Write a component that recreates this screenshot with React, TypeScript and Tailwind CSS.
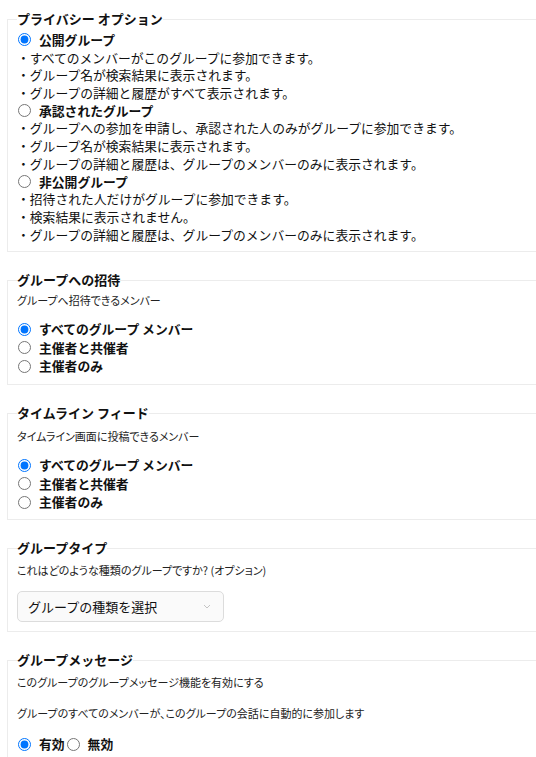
import React from "react";

const font = { fontFamily: '"Noto Sans CJK JP", "Noto Sans", sans-serif' };

function Section({ title, children, className = "" }: { title: string; children: React.ReactNode; className?: string }) {
  return (
    <fieldset className={`ml-[7px] mr-[-40px] border border-[#ececec] pl-[9px] ${className}`}>
      <legend className="text-[13px] font-bold leading-4 text-[#111]">{title}</legend>
      {children}
    </fieldset>
  );
}

function Radio({ name, label, checked }: { name: string; label: string; checked?: boolean }) {
  return (
    <label className="flex items-center">
      <input type="radio" name={name} defaultChecked={checked} className="m-0 ml-[1px] h-[13px] w-[13px]" />
      <span className="ml-[8px] font-bold text-[12.8px]">{label}</span>
    </label>
  );
}

function Sub({ children, className = "" }: { children: React.ReactNode; className?: string }) {
  return <p className={`text-[11px] leading-4 text-[#222] [font-feature-settings:'palt'] ${className}`}>{children}</p>;
}

const privacy = [
  {
    label: "公開グループ",
    checked: true,
    lines: [
      "・すべてのメンバーがこのグループに参加できます。",
      "・グループ名が検索結果に表示されます。",
      "・グループの詳細と履歴がすべて表示されます。",
    ],
  },
  {
    label: "承認されたグループ",
    lines: [
      "・グループへの参加を申請し、承認された人のみがグループに参加できます。",
      "・グループ名が検索結果に表示されます。",
      "・グループの詳細と履歴は、グループのメンバーのみに表示されます。",
    ],
  },
  {
    label: "非公開グループ",
    lines: [
      "・招待された人だけがグループに参加できます。",
      "・検索結果に表示されません。",
      "・グループの詳細と履歴は、グループのメンバーのみに表示されます。",
    ],
  },
];

export default function App() {
  return (
    <div className="w-full overflow-hidden bg-white pt-[11px] text-[#111]" style={font}>
      <Section title="プライバシー オプション" className="pb-[8px]">
        <div className="pt-[4px] text-[12.8px] leading-[17.7px]">
          {privacy.map((p) => (
            <div key={p.label}>
              <label className="flex h-[17.7px] items-center">
                <input type="radio" name="privacy" defaultChecked={p.checked} className="m-0 ml-[1px] h-[13px] w-[13px]" />
                <span className="ml-[8px] font-bold">{p.label}</span>
              </label>
              {p.lines.map((l) => (
                <div key={l} className="whitespace-nowrap">{l}</div>
              ))}
            </div>
          ))}
        </div>
      </Section>

      <Section title="グループへの招待" className="mt-[20px] pb-[9px]">
        <Sub className="pt-[4px]">グループへ招待できるメンバー</Sub>
        <div className="mt-[12px] flex flex-col gap-[0.5px] leading-[18px]">
          <Radio name="invite" label="すべてのグループ メンバー" checked />
          <Radio name="invite" label="主催者と共催者" />
          <Radio name="invite" label="主催者のみ" />
        </div>
      </Section>

      <Section title="タイムライン フィード" className="mt-[20px] pb-[8px]">
        <Sub className="pt-[7px]">タイムライン画面に投稿できるメンバー</Sub>
        <div className="mt-[12px] flex flex-col gap-[0.5px] leading-[18px]">
          <Radio name="timeline" label="すべてのグループ メンバー" checked />
          <Radio name="timeline" label="主催者と共催者" />
          <Radio name="timeline" label="主催者のみ" />
        </div>
      </Section>

      <Section title="グループタイプ" className="mt-[20px] pb-[9px]">
        <Sub className="pt-[6px]">これはどのような種類のグループですか? (オプション)</Sub>
        <div className="mt-[13px] flex h-[31px] w-[207px] items-center justify-between rounded-[5px] border border-[#dcdcdc] bg-[#fafafa] pl-[10px] pr-[12px] text-[13px]">
          <span>グループの種類を選択</span>
          <svg width="8" height="5" viewBox="0 0 8 5" fill="none">
            <path d="M1 1l3 3 3-3" stroke="#c4c4c4" strokeWidth="1" />
          </svg>
        </div>
      </Section>

      <Section title="グループメッセージ" className="mt-[20px] pb-[20px]">
        <Sub className="pt-[6px]">このグループのグループメッセージ機能を有効にする</Sub>
        <Sub className="mt-[15px]">グループのすべてのメンバーが、このグループの会話に自動的に参加します</Sub>
        <div className="mt-[14px] flex items-center leading-[18px]">
          <label className="flex items-center">
            <input type="radio" name="msg" defaultChecked className="m-0 ml-[1px] h-[13px] w-[13px]" />
            <span className="ml-[8px] font-bold text-[12.8px]">有効</span>
          </label>
          <label className="ml-[2px] flex items-center">
            <input type="radio" name="msg" className="m-0 h-[13px] w-[13px]" />
            <span className="ml-[8px] font-bold text-[12.8px]">無効</span>
          </label>
        </div>
      </Section>
    </div>
  );
}
